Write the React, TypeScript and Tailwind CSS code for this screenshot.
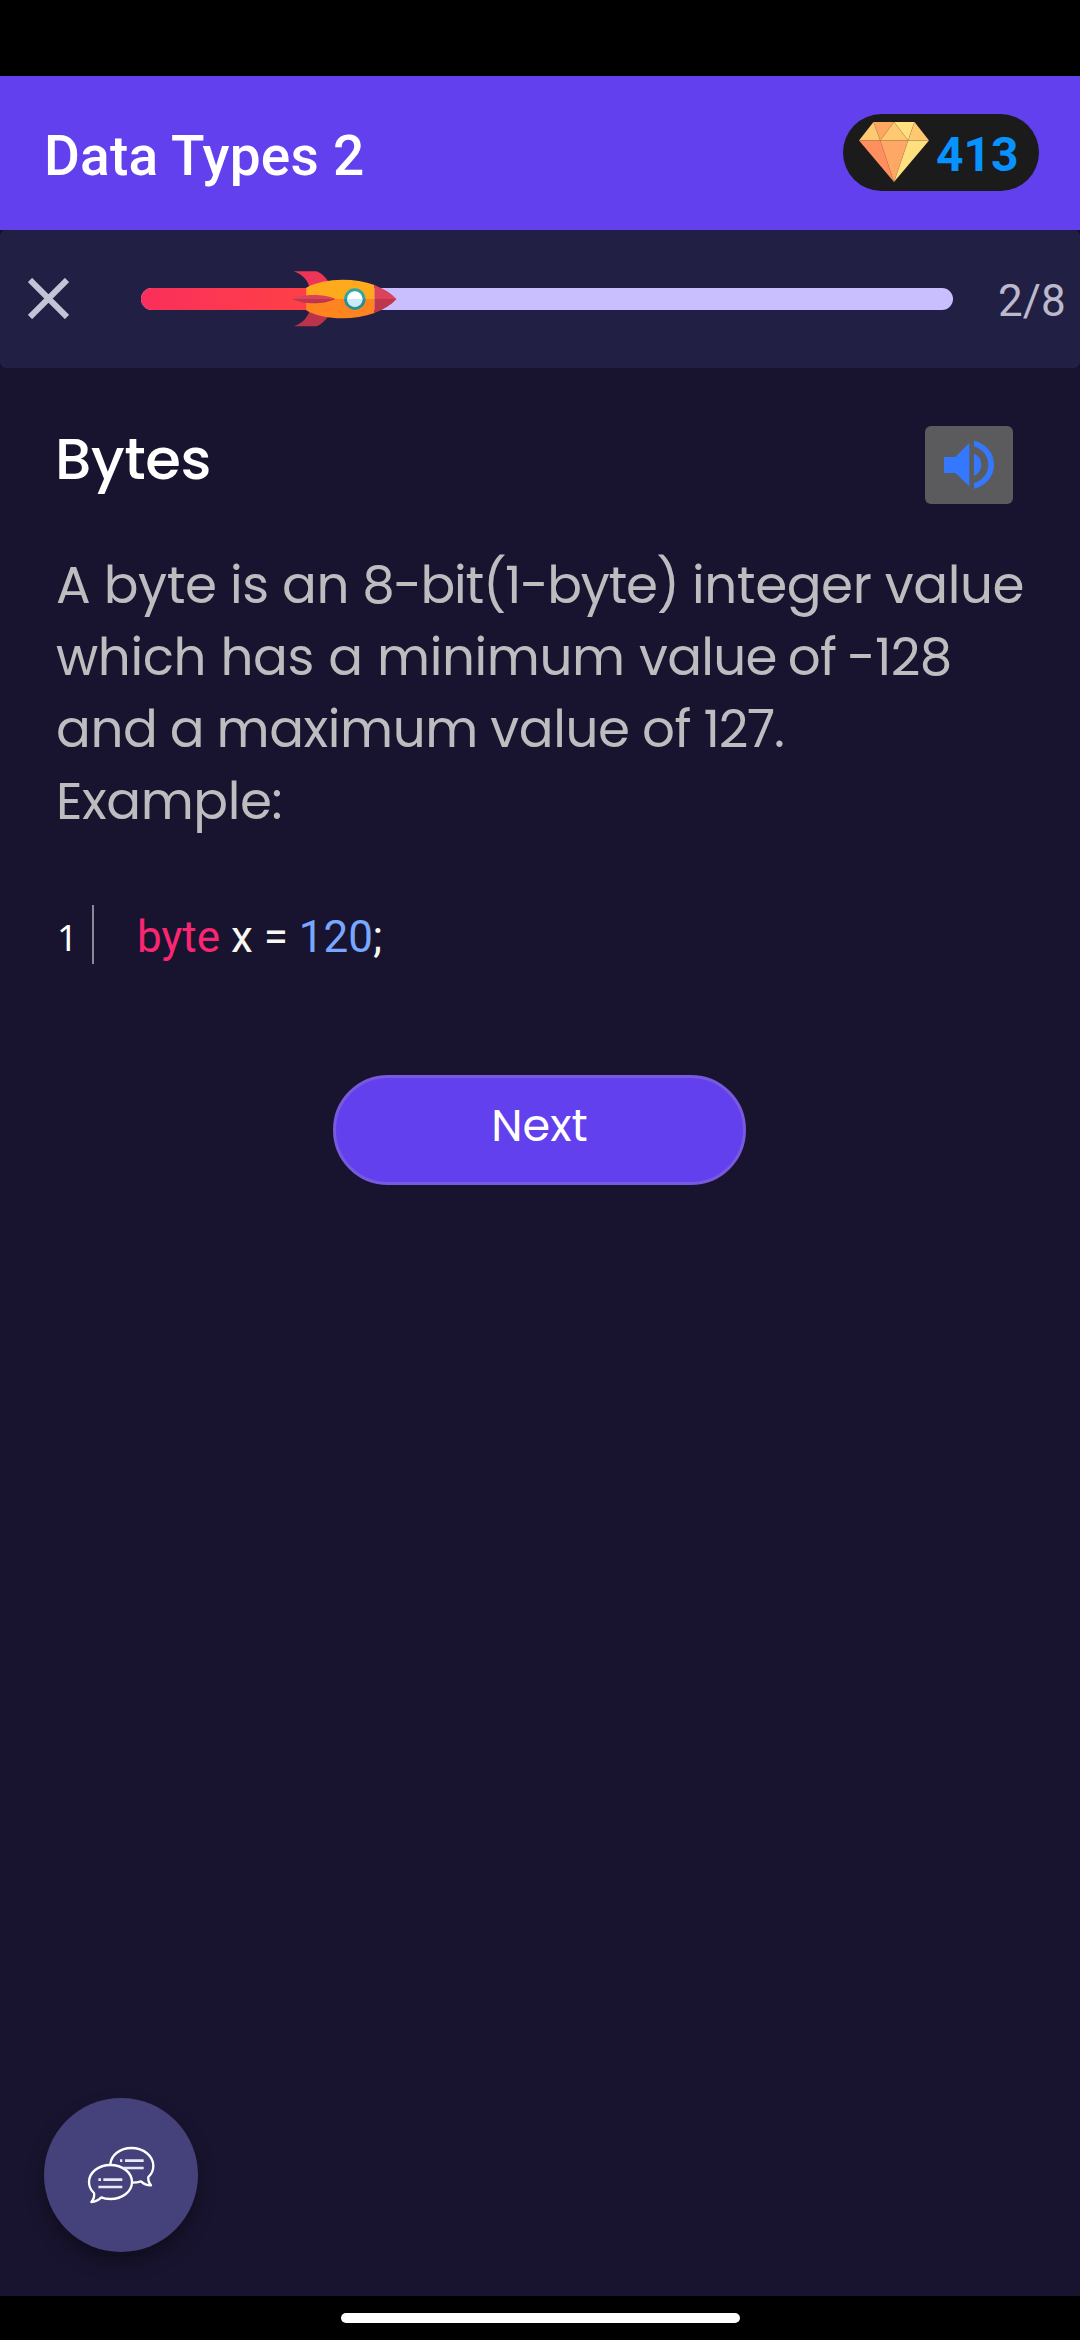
import React from "react";

function Diamond() {
  return (
    <svg className="mb-px h-[60px] w-[70px] shrink-0" viewBox="117 98 208 178">
      <path d="M160 98h61l-41 55z" fill="#ffa663" />
      <path d="M160 98l20 55h-63z" fill="#ffc971" />
      <path d="M221 98l42 55h-83z" fill="#ffc971" />
      <path d="M221 98h61l-19 55z" fill="#ffdf80" />
      <path d="M282 98l43 55h-62z" fill="#ffc971" />
      <path d="M117 153h63l41 123z" fill="#ff8f5e" />
      <path d="M180 153h83l-42 123z" fill="#ffa865" />
      <path d="M263 153h62L221 276z" fill="#ffe07f" />
      <path
        d="M117 153h208M160 98l20 55 41-55 42 55 19-55M180 153l41 123 42-123"
        fill="none"
        stroke="#c98a4c"
        strokeOpacity=".55"
        strokeWidth="1.5"
      />
    </svg>
  );
}

function Rocket() {
  return (
    <svg className="absolute -top-[17px] left-[151px] h-[56px] w-[105px]" viewBox="66 62 314 168">
      <path d="M71 63h68c16 6 27 17 35 30l-55 22c-5-23-20-42-48-52z" fill="#ee3558" />
      <path d="M71 228h68c16-6 27-17 35-30l-55-21c-5 23-20 41-48 51z" fill="#bb3348" />
      <path d="M108 112c50-28 140-32 205-8v42H108z" fill="#ffaa1c" />
      <path d="M108 180c50 29 140 32 205 8v-42H108z" fill="#ff8420" />
      <path d="M313 104c27 11 49 24 66 42h-66z" fill="#dc4259" />
      <path d="M313 188c27-10 49-23 66-42h-66z" fill="#bd364b" />
      <path d="M67 146c30-16 96-16 129 0z" fill="#dc4259" />
      <path d="M67 146c30 17 96 17 129 0z" fill="#bd364b" />
      <circle cx="254" cy="146" r="32" fill="#2fa7a5" />
      <path d="M222 146a32 32 0 0 0 64 0z" fill="#28908f" />
      <circle cx="254" cy="146" r="23" fill="#fff" />
      <path d="M231 146a23 23 0 0 0 46 0z" fill="#cdeafa" />
    </svg>
  );
}

function Speaker() {
  return (
    <svg className="h-[50px] w-[52px]" viewBox="0 0 156 150" fill="#3478ff">
      <path d="M3 51h34l42-42v130L37 99H3z" />
      <path d="M93 41c13 5 22 18 22 33s-9 28-22 33z" />
      <path d="M93 2c34 8 60 36 60 72s-26 64-60 72v-17c25-8 43-29 43-55s-18-47-43-55z" />
    </svg>
  );
}

function Chat() {
  return (
    <svg
      className="h-[58px] w-[68px]"
      viewBox="171 198 204 174"
      fill="none"
      stroke="#fff"
      strokeWidth="7"
      strokeLinejoin="round"
    >
      <path d="M241 252c3-28 30-48 63-48 37 0 66 24 66 54 0 12-5 24-15 33-1 10 1 17 8 25-12 0-22-4-30-12-9 3-17 4-26 4" />
      <path d="M241 255c37 0 65 23 65 51s-28 51-65 51c-10 0-19-1-27-5-8 8-18 13-30 14 8-9 10-18 8-27-10-9-15-20-15-33 0-28 28-51 64-51z" />
      <path d="M270 242h7M285 242h56M280 264h61M205 299h8M220 299h57M205 321h72" stroke="#e9e8f6" strokeWidth="8" />
    </svg>
  );
}

const poppins = "font-['Poppins','Inter',sans-serif]";

export default function App() {
  return (
    <div className="relative flex h-[2340px] w-[1080px] flex-col overflow-hidden bg-[#18142f] font-['Roboto',sans-serif]">
      <div className="h-[76px] shrink-0 bg-black" />

      <header className="flex h-[154px] shrink-0 items-center justify-between bg-[#6340ee] pr-[41px] pb-px pl-[44px]">
        <h1 className="pt-[7px] text-[55px] leading-[64px] font-medium tracking-[0.2px] whitespace-nowrap text-white">
          Data Types 2
        </h1>
        <div className="flex h-[77px] w-[196px] items-center rounded-full bg-[#1b1b1b] pl-[16px]">
          <Diamond />
          <span className="ml-[7px] pt-[5px] text-[48px] leading-[56px] font-bold text-[#0792ff]">413</span>
        </div>
      </header>

      <section className="shrink-0 bg-[#15112b]">
        <div className="flex h-[138px] items-center rounded-[6px] bg-[#221f44]">
          <svg className="mb-px ml-[28px] h-[41px] w-[41px] shrink-0" viewBox="0 0 41 41" stroke="#c3c4d6" strokeWidth="6">
            <path d="M2 2l37 37M39 2L2 39" />
          </svg>
          <div className="relative ml-[72px] h-[22px] w-[812px] shrink-0 rounded-full bg-[#c9bfff]">
            <div className="h-full w-[200px] rounded-l-full bg-linear-to-r from-[#fa2e5b] to-[#ff4340]" />
            <Rocket />
          </div>
          <span className="ml-[45px] pt-[4px] text-[44px] leading-[52px] text-[#bbb9cb]">2/8</span>
        </div>
      </section>

      <main className="flex flex-1 flex-col">
        <div className="flex justify-between pt-[58px] pr-[67px] pl-[55px]">
          <h2 className={`${poppins} text-[57.75px] leading-[66px] font-medium tracking-[-0.4px] text-white`}>Bytes</h2>
          <button className="flex h-[78px] w-[88px] items-center justify-center rounded-[6px] bg-[#5b5b5d]">
            <Speaker />
          </button>
        </div>

        <div
          className={`${poppins} mt-[45px] pl-[56px] text-[51.5px] leading-[72px] tracking-[-0.4px] whitespace-nowrap text-[#bdbcbf]`}
        >
          <p>
            A byte is an <span className="tracking-[-1.3px]">8-bit(1-byte)</span> integer value
          </p>
          <p className="[word-spacing:1px]">
            which has a minimum{" "}
            <span className="tracking-[-0.7px] [word-spacing:-2px]">value of -128</span>
          </p>
          <p className="[word-spacing:-1px]">
            and a maximum value of <span className="tracking-[-1.2px]">127.</span>
          </p>
          <p>Example:</p>
        </div>

        <div className="mt-[68px] flex h-[59px] pl-[57px]">
          <span className="w-[35px] pt-[5px] font-['Noto_Sans',sans-serif] text-[36px] leading-[56px] text-white">1</span>
          <div className="w-[2px] bg-[#8b8996]" />
          <code className="ml-[43px] pt-[6px] font-['Roboto',sans-serif] text-[44px] leading-[52px] whitespace-pre text-[#f8f8f2]">
            <span className="text-[#f92672]">byte</span> x = <span className="text-[#79a6ff]">120</span>;
          </code>
        </div>

        <button
          className={`${poppins} mt-[111px] ml-[333px] flex h-[110px] w-[413px] items-center justify-center rounded-full border-[3px] border-[#7859df] bg-[#6340ee] pb-[8px] text-[44.5px] text-white`}
        >
          Next
        </button>
      </main>

      <button className="absolute top-[2098px] left-[44px] flex h-[154px] w-[154px] items-center justify-center rounded-full bg-[#45417a] shadow-[0_10px_18px_rgba(0,0,0,0.35)]">
        <Chat />
      </button>

      <footer className="flex h-[44px] shrink-0 justify-center bg-black pt-[17px]">
        <div className="h-[10px] w-[399px] rounded-full bg-white" />
      </footer>
    </div>
  );
}
